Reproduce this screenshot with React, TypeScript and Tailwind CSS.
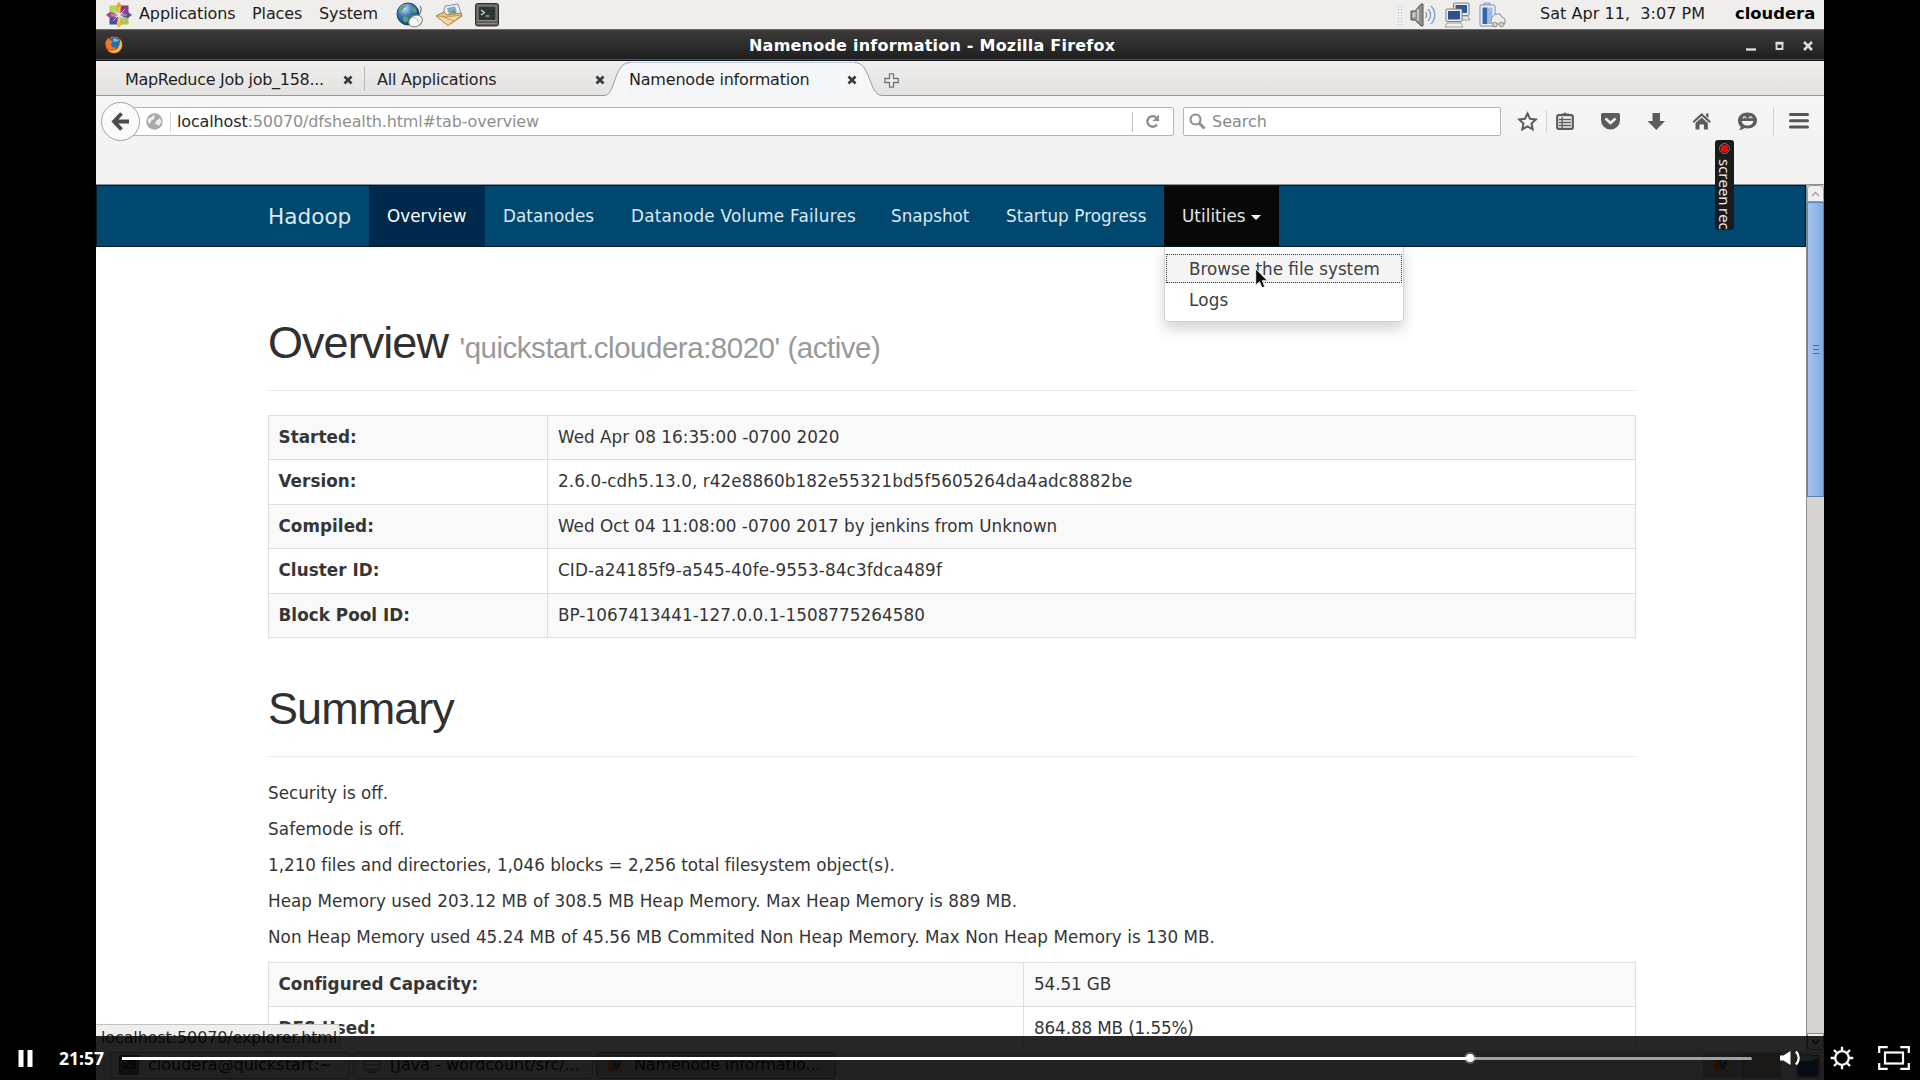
import React from "react";

const CloudLogo = () => (
  <svg className="size-[26px] shrink-0" viewBox="0 0 26 26">
    <path d="M13 0l3.500 4.500-3.500 8-3.500-8z" fill="#e8a51d" />
    <path d="M13 26l3.500-4.500-3.500-8-3.500 8z" fill="#f0b43a" />
    <path d="M0 13l4.500-3.500 8 3.500-8 3.500z" fill="#a14a86" />
    <path d="M26 13l-4.500-3.500-8 3.500 8 3.500z" fill="#5b4a9c" />
    <path d="M3.500 3.500h7l1.500 8-8.500-1.500z" fill="#b7d052" />
    <path d="M22.500 3.500h-7l-1.500 8 8.500-1.500z" fill="#8d3a80" />
    <path d="M3.500 22.500h7l1.500-8-8.500 1.500z" fill="#4b4a9a" />
    <path d="M22.500 22.500h-7l-1.500-8 8.500 1.500z" fill="#a8c648" />
    <path d="M13 5v16M5 13h16M7 7l12 12M19 7L7 19" stroke="#f3eef2" strokeWidth=".7" />
  </svg>
);

const GlobeMouse = () => (
  <svg className="h-[26px] w-[28px] shrink-0" viewBox="0 0 28 26">
    <defs>
      <radialGradient id="gm" cx=".35" cy=".25" r=".8">
        <stop offset="0" stopColor="#c4e0f4" />
        <stop offset=".45" stopColor="#3c78b4" />
        <stop offset="1" stopColor="#12355f" />
      </radialGradient>
    </defs>
    <circle cx="12" cy="12" r="11" fill="url(#gm)" stroke="#1f4468" strokeWidth="1" />
    <path d="M3 9c1-3 3-5 6-6 2 0 1 2-1 3s-1 3-5 3zM7 15c3-1 5 0 6 2l-3 4c-2-1-4-3-3-6zM16 5c3 0 4 2 5 5l-3 1-2-3z" fill="#57a465" />
    <path d="M22 14c3-3 4-7 2-10" fill="none" stroke="#555" strokeWidth="1" />
    <ellipse cx="19.500" cy="19" rx="7.200" ry="5.500" transform="rotate(-28 19.500 19)" fill="#f6f6f4" stroke="#7b7d7b" strokeWidth="1" />
    <path d="M16 15c3 0 6 2 6.500 5" fill="none" stroke="#9a9c9a" strokeWidth=".8" />
  </svg>
);

const MailIcon = () => (
  <svg className="h-[24px] w-[28px] shrink-0" viewBox="0 0 28 24">
    <path d="M10 3l13-2 3 9-10 6-8-4z" fill="#e9eef3" stroke="#8b9299" strokeWidth="1" />
    <path d="M12 5l8-1.500 2 5-8 3z" fill="#7fa9cf" />
    <path d="M15 10l4-3 3 4" fill="#6f9a55" />
    <path d="M1 13l8-4 3 3 14-2 1 3-14 9.500z" fill="#e7c48b" stroke="#a47b3e" strokeWidth="1" />
    <path d="M1 13l10 1 16-2-14 10.500z" fill="#f3d9a8" stroke="#b68e52" strokeWidth=".8" />
    <path d="M8 14l11 4" stroke="#c39c60" strokeWidth="1" />
  </svg>
);

const Terminal = ({ cls = "size-[24px]" }: { cls?: string }) => (
  <svg className={cls + " shrink-0"} viewBox="0 0 24 24">
    <rect x=".5" y=".5" width="23" height="22.500" rx="2" fill="#5d5f5b" stroke="#2e302e" />
    <rect x="3" y="3" width="18" height="14.500" fill="#2f3533" stroke="#8d908b" strokeWidth="1" />
    <path d="M6 7l3.500 2.500L6 12M10.500 13h4" fill="none" stroke="#d6dad4" strokeWidth="1.200" />
    <path d="M2 20.500h20" stroke="#8b8d88" strokeWidth="1" />
  </svg>
);

const Firefox = ({ cls = "size-[17px]" }: { cls?: string }) => (
  <svg className={cls + " shrink-0"} viewBox="0 0 18 18">
    <circle cx="9" cy="9" r="8.500" fill="#e8571c" />
    <circle cx="9.500" cy="7.500" r="6" fill="#2a6db0" />
    <path d="M8 3c2-1 5 0 6 2-2 0-3 1-5 1z" fill="#6cc0e6" />
    <path d="M15.500 3.500c2.500 4 2 9-2 12-3 2-8 2-10.500-1.500 4 2 9 0 10.500-3 1.200-2.500 1.500-5 2-7.500z" fill="#f7b93a" />
    <path d="M1 5c1-1 1.500-2 1.500-3l2 2.500c2 0 3 .5 3 1.500L6 8c0 3 2 4 5 3.500-2 3-7 2.500-9-.5S.5 7 1 5z" fill="#ee7a23" />
  </svg>
);

const Speaker = () => (
  <svg className="h-[24px] w-[26px] shrink-0" viewBox="0 0 26 24">
    <path d="M1 8h4l6-7h2v22h-2l-6-6H1z" fill="#8b8d8a" stroke="#565856" strokeWidth="1" />
    <path d="M2.500 9.500h3v5h-3z" fill="#c9cbc8" />
    <path d="M8 6v12" stroke="#dcdedb" strokeWidth="1.500" />
    <g fill="none" stroke="#7f9fc8" strokeWidth="1.400">
      <path d="M15.500 9c1.500 2 1.500 4 0 6" />
      <path d="M18 6c3.500 3.500 3.500 8.500 0 12" />
      <path d="M21 3c5 5 5 13 0 18" />
    </g>
  </svg>
);

const Monitors = () => (
  <svg className="h-[26px] w-[27px] shrink-0" viewBox="0 0 27 26">
    <rect x="9.500" y="1" width="15.500" height="12.500" rx="1" fill="#e9ebe8" stroke="#7d7f7c" />
    <rect x="11.500" y="3" width="11.500" height="8" fill="#2f569a" />
    <path d="M17 14h7l2 4h-8z" fill="#e4e6e3" stroke="#8b8d8a" strokeWidth=".8" />
    <rect x="2" y="7" width="16" height="12.500" rx="1" fill="#eef0ed" stroke="#7d7f7c" />
    <rect x="4" y="9" width="12" height="8.500" fill="#2c5092" />
    <path d="M3 21h14l2 4H1z" fill="#f0f1ef" stroke="#8b8d8a" strokeWidth=".8" />
  </svg>
);

const Battery = () => (
  <svg className="h-[26px] w-[27px] shrink-0" viewBox="0 0 27 26">
    <rect x="5" y="1" width="6" height="3" fill="#d5dbe2" stroke="#7890ae" strokeWidth=".8" />
    <rect x="1" y="3" width="15" height="21" rx="1" fill="#eef2f7" stroke="#6f8fb8" />
    <rect x="3.500" y="5.500" width="5" height="16.500" fill="#3567a8" />
    <rect x="8.500" y="5.500" width="5" height="16.500" fill="#9dbbe0" />
    <path d="M12 20c0-5 3-6 4-8h5l2 3 3 2v5H13z" fill="#eceeeb" stroke="#8b8d8a" />
    <circle cx="16" cy="22.500" r="2.300" fill="#d3d5d2" stroke="#8b8d8a" />
    <circle cx="22.500" cy="22.500" r="2.300" fill="#d3d5d2" stroke="#8b8d8a" />
  </svg>
);

const TabClose = ({ cls }: { cls: string }) => (
  <svg className={"size-[10px] shrink-0 " + cls} viewBox="0 0 10 10">
    <path d="M1.500 1.500l7 7M8.500 1.500l-7 7" stroke="#3a3a3a" strokeWidth="2.700" />
  </svg>
);

const MenuBar = () => (
  <div className="flex h-[29px] items-center bg-[#efeeec] pb-[2px] text-[16px] leading-[23px] text-[#1c1c1c]">
    <div className="ml-[10px] mt-[2px]"><CloudLogo /></div>
    <span className="ml-[7px] w-[113px] tracking-[-0.1px]">Applications</span>
    <span className="w-[67px] tracking-[-0.1px]">Places</span>
    <span className="w-[77px] tracking-[-0.1px]">System</span>
    <div className="mt-[2px] flex items-center">
      <GlobeMouse />
      <div className="ml-[11px]"><MailIcon /></div>
      <div className="ml-[12px]"><Terminal /></div>
    </div>
    <div className="ml-auto mt-[2px] flex items-center">
      <div className="mr-[7px] h-[20px] w-[6px] bg-[radial-gradient(circle,#bbb_0.8px,transparent_1px)] bg-[size:3px_3px]" />
      <Speaker />
      <div className="ml-[8px]"><Monitors /></div>
      <div className="ml-[8px]"><Battery /></div>
    </div>
    <span className="ml-[34px] w-[195px] tracking-[0.05px] whitespace-pre">Sat Apr 11,  3:07 PM</span>
    <span className="w-[89px] text-[16.400px] font-bold text-black">cloudera</span>
  </div>
);

const TitleBar = () => (
  <div className="flex h-[32px] items-center border-y border-t-[#6a6a68] border-b-[#101418] bg-linear-to-b from-[#3b3a39] via-[#2f2e2e] to-[#1d1d1d] shadow-[inset_0_-1px_0_#44586e]">
    <div className="ml-[9px]"><Firefox cls="size-[18px]" /></div>
    <span className="ml-[626px] mt-[2px] w-[400px] whitespace-nowrap text-[16px] leading-[24px] font-bold tracking-[0.22px] text-white">Namenode information - Mozilla Firefox</span>
    <svg className="ml-auto mr-[9px] mt-px h-[12px] w-[70px]" viewBox="0 0 70 12" fill="none" stroke="#dcdcdc">
      <path d="M1 9.500h10" strokeWidth="2.400" />
      <path d="M31.500 3.500h6v5.500h-6z" strokeWidth="1.800" />
      <path d="M30.600 3h7.800" strokeWidth="2.500" />
      <path d="M59 2l8 8M67 2l-8 8" strokeWidth="2.600" />
    </svg>
  </div>
);

const TabStrip = () => (
  <div className="flex h-[35px] bg-linear-to-b from-[#efeeed] to-[#e3e2e0] text-[16px] leading-[34px] tracking-[-0.2px] text-[#1f1f1f]">
    <div className="flex w-[269px] items-center border-b border-[#979797] pl-[29px]">
      <span className="mt-[3px] w-[218px] shrink-0 whitespace-nowrap tracking-[-0.3px]">MapReduce Job job_158...</span>
      <TabClose cls="mt-[3px]" />
      <div className="ml-[11px] h-[25px] w-px bg-[#b9b8b6]" />
    </div>
    <div className="flex w-[240px] items-center border-b border-[#979797] pl-[12px]">
      <span className="mt-[3px] w-[218px] shrink-0 whitespace-nowrap">All Applications</span>
      <TabClose cls="mt-[3px]" />
    </div>
    <div className="relative -ml-[4px] h-[35px] w-[284px]">
      <svg className="absolute inset-0" width="284" height="35" viewBox="0 0 284 35">
        <path d="M0 35V34.500h3C15 34.500 12 2 29 1.500H254C270 2 268 34.500 281 34.500h3V35z" fill="#f5f6f7" />
        <path d="M0 34.500h3C15 34.500 12 2 29 1.500" fill="none" stroke="#979c9f" />
        <path d="M29 1.500H254" stroke="#c3cddc" />
        <path d="M254 1.500C270 2 268 34.500 281 34.500h3" fill="none" stroke="#979c9f" />
      </svg>
      <div className="relative flex h-[34px] items-center pl-[28px]">
        <span className="mt-[3px] w-[218px] whitespace-nowrap">Namenode information</span>
        <TabClose cls="mt-[3px]" />
      </div>
    </div>
    <div className="flex flex-1 items-center border-b border-[#979797]">
      <svg className="-ml-px mt-[4px] size-[15px]" viewBox="0 0 15 15">
        <path d="M5.500.8h4v4.700h4.700v4H9.500v4.700h-4V9.500H.8v-4h4.700z" fill="#eeeeec" stroke="#767676" strokeWidth="1.300" />
      </svg>
    </div>
  </div>
);

const ToolbarIcons = () => (
  <svg className="h-[32px] w-[310px] shrink-0" viewBox="1510 105 310 32" fill="#5c5c5c">
    <path d="M1527.500 113.500l2.500 5.300 5.800.7-4.300 4 1.200 5.800-5.200-2.900-5.200 2.900 1.200-5.800-4.300-4 5.800-.7z" fill="#f6f6f6" stroke="#5c5c5c" strokeWidth="2" />
    <path d="M1546.500 110v22M1773.500 107v28" stroke="#d2d2d2" />
    <rect x="1557.200" y="115.200" width="15.600" height="13.600" rx="1.500" fill="none" stroke="#5c5c5c" strokeWidth="2.200" />
    <path d="M1561 115v-1.500h2.500a1.600 1.600 0 0 1 3 0h2.500v1.500z" />
    <path d="M1559 119.500h12M1559 122.500h12M1559 125.500h12M1562.200 117v11" stroke="#5c5c5c" strokeWidth="1.300" />
    <path d="M1602.500 113h16a1.500 1.500 0 0 1 1.500 1.500v5.500a9.500 9.500 0 0 1-19 0v-5.500a1.500 1.500 0 0 1 1.500-1.500z" />
    <path d="M1605.500 118.500l5 4.500 5-4.500" fill="none" stroke="#f4f4f4" strokeWidth="2.500" />
    <path d="M1652.500 113h7.500v8h5l-8.700 9-8.800-9h5z" />
    <path d="M1692.500 121.500l9.200-8.500 9.200 8.500-1.400 1.500-7.800-7-7.800 7zM1695.500 123l6.200-5.500 6.200 5.500v6.500h-4v-5h-4.400v5h-4zM1706 113.500h2.500v4.500l-2.500-2z" />
    <path d="M1747.500 112.500c5.500 0 9.500 3.500 9.500 8s-4 8-9.500 8c-1 0-2-.1-3-.4-1.500 1.200-3.500 2-5.500 1.900 1-.9 1.600-2 1.700-3.300-1.700-1.500-2.700-3.700-2.700-6.200 0-4.500 4-8 9.500-8z" />
    <path d="M1741.500 121h12c-.5 3-3 4.500-6 4.500s-5.500-1.500-6-4.500z" fill="#f4f4f4" />
    <path d="M1743 118.300c.5-1.800 2.700-1.800 3.200 0M1749 118.300c.5-1.800 2.700-1.800 3.200 0" fill="none" stroke="#f4f4f4" strokeWidth="1.200" />
    <path d="M1790.500 114.500h17M1790.500 120.800h17M1790.500 127h17" stroke="#555" strokeWidth="3" strokeLinecap="round" />
  </svg>
);

const Toolbar = () => (
  <div className="flex h-[89px] items-start border-b border-[#8a9196] bg-linear-to-b from-[#f6f6f6] via-[#f3f3f3] to-[#f4f3f1] pt-[11px] text-[16px]">
    <div className="relative z-10 -mt-[5px] ml-[5px] flex size-[39px] shrink-0 items-center justify-center rounded-full border border-[#a3a3a3] bg-[#fafafa]">
      <svg className="size-[19px]" viewBox="0 0 19 19" fill="none" stroke="#4c4c4c" strokeWidth="3.800">
        <path d="M10.500 1.500l-7.500 8 7.500 8M3.500 9.500H18" />
      </svg>
    </div>
    <div className="-ml-[9px] flex h-[29px] w-[1043px] shrink-0 items-center rounded-r-[2px] border border-[#b4b4b4] bg-white leading-[27px]">
      <svg className="ml-[14px] size-[17px]" viewBox="0 0 17 17">
        <circle cx="8.500" cy="8.500" r="8.200" fill="#a9a9a9" />
        <path d="M2 6c2-2 4-1 5-4l2 1-1 3-3 2-1 3-2-2zM10 8l4-3 1.500 4-2.500 4-2-1.500-2-.5z" fill="#efefef" />
      </svg>
      <div className="ml-[7px] h-[20px] w-px bg-[#d8d8d8]" />
      <span className="ml-[6px] whitespace-nowrap tracking-[-0.14px] text-[#8f8f8f]"><span className="text-[#262626]">localhost</span>:50070/dfshealth.html#tab-overview</span>
      <div className="ml-auto h-[20px] w-px bg-[#c4c4c4]" />
      <svg className="ml-[12px] mr-[13px] size-[15px]" viewBox="0 0 15 15">
        <path d="M11 3.300A5.300 5.300 0 1 0 12 10.500" fill="none" stroke="#8c8c8c" strokeWidth="2.300" />
        <path d="M14 .5v6.500H7.500z" fill="#8c8c8c" />
      </svg>
    </div>
    <div className="ml-[9px] flex h-[29px] w-[318px] shrink-0 items-center rounded-[2px] border border-[#b4b4b4] bg-white leading-[27px] text-[#8a8a8a]">
      <svg className="ml-[5px] size-[17px]" viewBox="0 0 17 17" fill="none" stroke="#909090">
        <circle cx="6.500" cy="6.500" r="5" strokeWidth="2.200" />
        <path d="M10 10l5.500 5.500" strokeWidth="3" />
      </svg>
      <span className="ml-[6px]">Search</span>
    </div>
    <div className="-mt-[2px] ml-[9px]"><ToolbarIcons /></div>
  </div>
);

const navItems = [
  { label: "Overview", cls: "w-[116px] bg-[#002a4d] text-white tracking-[0.05px]" },
  { label: "Datanodes", cls: "w-[128px] tracking-[0.05px]" },
  { label: "Datanode Volume Failures", cls: "w-[260px] tracking-[0.25px]" },
  { label: "Snapshot", cls: "w-[115px]" },
  { label: "Startup Progress", cls: "w-[176px] tracking-[0.08px]" },
];

const Cursor = () => (
  <svg className="absolute left-[90px] top-[21px] h-[22px] w-[14px]" viewBox="0 0 14 22">
    <path d="M.7.800v16.500l3.800-3.600 2.500 6.100 2.800-1.200-2.500-5.800h5.200z" fill="#0b0b0b" stroke="#f2f2f2" strokeWidth="1" />
  </svg>
);

const HadoopNav = () => (
  <div className="flex h-[62px] border-[1.5px] border-[#06192b] bg-[#00486f] pl-[171px] text-[16.8px] leading-[61px] text-[#dbe9f2]">
    <span className="w-[101px] text-[21.6px]">Hadoop</span>
    {navItems.map((n) => (
      <span key={n.label} className={"shrink-0 whitespace-nowrap pl-[18px] " + n.cls}>{n.label}</span>
    ))}
    <div className="relative w-[115px] shrink-0 bg-[#080808] pl-[18px] text-[#e4e4e4]">
      <div className="flex items-center">
        <span className="w-[69px] tracking-[0.05px]">Utilities</span>
        <svg className="mt-[2px] h-[5px] w-[10px]" viewBox="0 0 10 5"><path d="M0 0h10L5 5z" fill="#fff" /></svg>
      </div>
      <div className="absolute left-0 top-[61px] z-20 h-[75px] w-[240px] rounded-b-[5px] border border-t-0 border-[#d4d4d4] bg-white pt-[7px] leading-[29px] text-[#404040] shadow-[0_7px_14px_rgba(0,0,0,0.18)]">
        <div className="mx-px h-[29px] border border-dotted border-[#333] bg-[#f5f5f5] pl-[22px] leading-[28px]">Browse the file system</div>
        <div className="mt-[3px] pl-[24px] tracking-[0.2px]">Logs</div>
        <Cursor />
      </div>
    </div>
  </div>
);

type Row = [label: string, value: string, tracking: string];

const overviewRows: Row[] = [
  ["Started:", "Wed Apr 08 16:35:00 -0700 2020", "tracking-[0.03px]"],
  ["Version:", "2.6.0-cdh5.13.0, r42e8860b182e55321bd5f5605264da4adc8882be", "tracking-[0.09px]"],
  ["Compiled:", "Wed Oct 04 11:08:00 -0700 2017 by jenkins from Unknown", "tracking-[0.01px]"],
  ["Cluster ID:", "CID-a24185f9-a545-40fe-9553-84c3fdca489f", "tracking-[0.15px]"],
  ["Block Pool ID:", "BP-1067413441-127.0.0.1-1508775264580", "tracking-[0.05px]"],
];

const summaryRows: Row[] = [
  ["Configured Capacity:", "54.51 GB", "tracking-[-0.1px]"],
  ["DFS Used:", "864.88 MB (1.55%)", "tracking-[-0.12px]"],
];

const summaryText = [
  { text: "Security is off.", cls: "" },
  { text: "Safemode is off.", cls: "tracking-[0.1px]" },
  { text: "1,210 files and directories, 1,046 blocks = 2,256 total filesystem object(s).", cls: "tracking-[-0.02px]" },
  { text: "Heap Memory used 203.12 MB of 308.5 MB Heap Memory. Max Heap Memory is 889 MB.", cls: "tracking-[0.04px]" },
  { text: "Non Heap Memory used 45.24 MB of 45.56 MB Commited Non Heap Memory. Max Non Heap Memory is 130 MB.", cls: "tracking-[0.03px]" },
];

const InfoTable = ({ rows, labelCls }: { rows: Row[]; labelCls: string }) => (
  <div className="w-[1368px] border border-b-0 border-[#dedede]">
    {rows.map(([k, v, tracking], i) => (
      <div key={k} className={"flex h-[44.4px] items-center border-b border-[#dedede] leading-[43px] " + (i % 2 === 0 ? "bg-[#f9f9f9]" : "bg-white")}>
        <div className={"h-full shrink-0 border-r border-[#dedede] pl-[9.500px] font-bold tracking-[0.05px] " + labelCls}>{k}</div>
        <div className={"h-full pl-[10px] " + tracking}>{v}</div>
      </div>
    ))}
  </div>
);

const headingCls =
  "h-[73px] w-[1368px] shrink-0 whitespace-nowrap border-b border-[#ebebeb] font-['Liberation_Sans',sans-serif] text-[45px] leading-[50px] tracking-[-0.95px] text-[#303030]";

const Page = () => (
  <div className="flex h-[804px] flex-col overflow-hidden bg-white pl-[172px] text-[16.8px] text-[#353535]">
    <h1 className={"mt-[71px] " + headingCls}>
      Overview <span className="text-[29.5px] tracking-[-0.48px] text-[#999]">'quickstart.cloudera:8020' (active)</span>
    </h1>
    <div className="mt-[24px]"><InfoTable rows={overviewRows} labelCls="w-[279px]" /></div>
    <h1 className={"mt-[46px] " + headingCls}>Summary</h1>
    <div className="mt-[24px] mb-px">
      {summaryText.map((p) => (
        <p key={p.text} className={"mb-[12px] leading-[24px] whitespace-nowrap " + p.cls}>{p.text}</p>
      ))}
    </div>
    <InfoTable rows={summaryRows} labelCls="w-[755px]" />
  </div>
);

const Scrollbar = () => (
  <div className="flex h-[865px] w-[18px] shrink-0 flex-col border-l border-[#8d8d8b] bg-[#d6d3d0]">
    <div className="flex h-[17px] items-center justify-center rounded-t-[4px] border border-[#9b9b99] bg-[#f0efee]">
      <svg className="h-[6px] w-[9px]" viewBox="0 0 9 6"><path d="M1 5l3.500-3.500L8 5" fill="none" stroke="#a3a3a1" strokeWidth="1.500" /></svg>
    </div>
    <div className="flex h-[295px] flex-col items-center justify-center gap-[3px] border border-[#5a82b8] bg-linear-to-r from-[#a3c5f0] to-[#83abdf]">
      <div className="h-px w-[6px] bg-[#456ea8]" />
      <div className="h-px w-[6px] bg-[#456ea8]" />
      <div className="h-px w-[6px] bg-[#456ea8]" />
    </div>
    <div className="mt-auto flex h-[17px] items-center justify-center rounded-b-[4px] border border-[#8b8b89] bg-[#f0efee]">
      <svg className="h-[6px] w-[9px]" viewBox="0 0 9 6"><path d="M1 1l3.500 3.500L8 1" fill="none" stroke="#444" strokeWidth="1.800" /></svg>
    </div>
  </div>
);

const ScreenRec = () => (
  <div className="absolute left-[1715px] top-[140px] z-30 flex h-[90px] w-[19px] flex-col items-center rounded-[3px] bg-[#1b1b1b] pt-[3px]">
    <div className="flex size-[11px] shrink-0 items-center justify-center rounded-full border border-[#e05050]">
      <div className="size-[7px] rounded-[2px] bg-[#ff0000]" />
    </div>
    <div className="mt-[5px] flex h-[70px] w-[19px] gap-[2px] whitespace-nowrap font-['Open_Sans',sans-serif] text-[15px] leading-[19px] text-[#f2f2f2] [writing-mode:vertical-rl]">
      <span>screen</span>
      <span>rec</span>
    </div>
  </div>
);

const Taskbar = () => (
  <div className="flex h-[30px] items-center bg-[#e6e5e3] text-[16px] leading-[24px] text-[#1a1a1a]">
    <div className="ml-[14px] flex h-[27px] w-[240px] items-center rounded-[4px] border border-[#a2a19f] bg-[#dededc]">
      <div className="ml-[8px] flex"><Terminal cls="size-[20px]" /></div>
      <span className="ml-[9px] whitespace-nowrap">cloudera@quickstart:~</span>
    </div>
    <div className="ml-[3px] flex h-[27px] w-[240px] items-center rounded-[4px] border border-[#a2a19f] bg-[#dededc]">
      <svg className="ml-[9px] size-[18px]" viewBox="0 0 18 18">
        <circle cx="9" cy="9" r="8" fill="#b0b0b0" stroke="#777" />
        <path d="M2 7h14M2 11h14" stroke="#ededed" strokeWidth="1.800" />
      </svg>
      <span className="ml-[9px] whitespace-nowrap">[Java - wordcount/src/...</span>
    </div>
    <div className="ml-[3px] flex h-[27px] w-[240px] items-center rounded-[4px] border border-[#8c8b89] bg-[#c2c1bf]">
      <div className="ml-[10px]"><Firefox /></div>
      <span className="ml-[10px] whitespace-nowrap tracking-[-0.15px]">Namenode informatio...</span>
    </div>
    <div className="ml-auto flex h-[25px] w-[79px] bg-[#a7a49d]">
      <div className="flex w-[39px] items-center justify-center border border-[#ccc] bg-[#a9b9cf]"><Firefox /></div>
    </div>
    <svg className="ml-[15px] mr-[4px] h-[25px] w-[24px]" viewBox="0 0 24 25">
      <path d="M1 4l4-3 4 2 4-2 4 2 5-1 1 5v14a3 3 0 0 1-3 3H4a3 3 0 0 1-3-3z" fill="#c3cbd6" stroke="#555" />
      <path d="M2 8h14l3-2h3v14a3 3 0 0 1-3 3H5a3 3 0 0 1-3-3z" fill="#2d5796" />
    </svg>
  </div>
);

const PlayerControls = () => (
  <div className="absolute inset-x-0 bottom-0 z-40 flex h-[44px] items-center bg-black/85 text-white">
    <svg className="ml-[18px] h-[17px] w-[16px] shrink-0" viewBox="0 0 16 17" fill="#fff"><path d="M.5 0h5v17h-5zM9.500 0h5v17h-5z" /></svg>
    <span className="ml-[25px] w-[63px] font-['Open_Sans',sans-serif] text-[17.5px] leading-[24px] font-bold">21:57</span>
    <div className="flex h-[3px] w-[1630px] shrink-0 items-center rounded bg-[#a2a2a2]">
      <div className="h-[3px] w-[1344px] bg-white" />
      <div className="size-[8px] rounded-full bg-white shadow-[0_0_0_2px_rgba(255,255,255,0.25)]" />
    </div>
    <svg className="ml-[28px] h-[16px] w-[22px] shrink-0" viewBox="0 0 22 16">
      <path d="M0 5.500h3.500L10.500 1v14L3.500 10.500H0z" fill="#fff" />
      <path d="M16 1.500c3.500 4 3.500 9 0 13" fill="none" stroke="#fff" strokeWidth="2.400" />
    </svg>
    <svg className="ml-[28px] size-[24px] shrink-0" viewBox="0 0 24 24" fill="none" stroke="#fff">
      <circle cx="12" cy="12" r="6.800" strokeWidth="2.300" />
      <path d="M12 .7v4M12 19.300v4M.7 12h4M19.300 12h4M4 4l2.800 2.800M17.200 17.200L20 20M20 4l-2.800 2.800M6.800 17.200L4 20" strokeWidth="2.300" />
    </svg>
    <svg className="ml-[24px] h-[24px] w-[32px] shrink-0" viewBox="0 0 32 24" fill="none" stroke="#fff" strokeWidth="2.200">
      <path d="M1.200 7V1.200h8.500M22.300 1.200h8.500V7M30.800 17v5.800h-8.500M9.700 22.800H1.200V17" />
      <rect x="7" y="6.500" width="18" height="11" />
    </svg>
  </div>
);

export default function App() {
  return (
    <div className="relative h-[1080px] w-[1920px] overflow-hidden bg-black font-['DejaVu_Sans',sans-serif]">
      <div className="mx-auto flex h-[1080px] w-[1728px] flex-col">
        <MenuBar />
        <TitleBar />
        <TabStrip />
        <Toolbar />
        <div className="flex h-[865px]">
          <div className="relative w-[1710px]">
            <HadoopNav />
            <Page />
            <div className="absolute bottom-0 left-0 h-[26px] w-[244px] rounded-tr-[3px] border border-b-0 border-l-0 border-[#c4c4c4] bg-[#f0efee] pl-[5px] text-[16px] leading-[25px] tracking-[-0.12px] text-[#333]">
              localhost:50070/explorer.html
            </div>
          </div>
          <Scrollbar />
        </div>
        <Taskbar />
      </div>
      <ScreenRec />
      <PlayerControls />
    </div>
  );
}
